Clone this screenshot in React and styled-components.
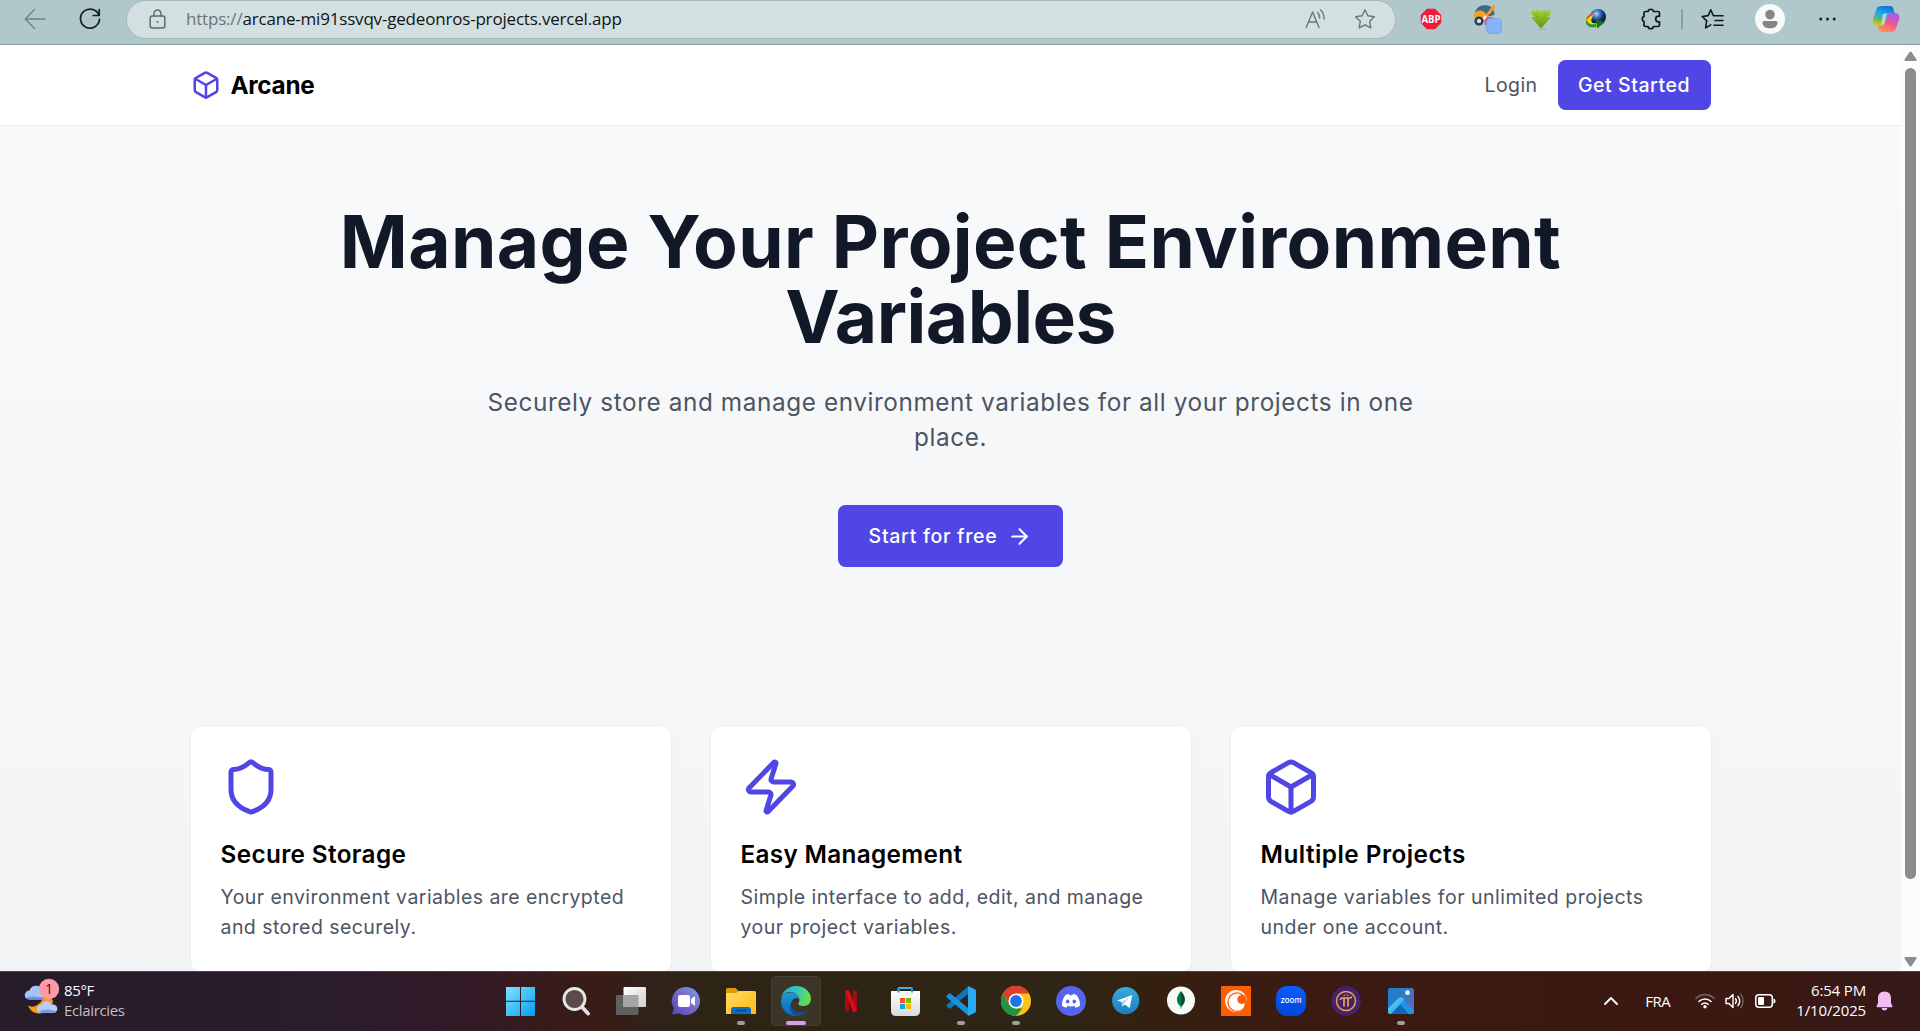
import React from 'react';
import styled, { createGlobalStyle } from 'styled-components';
import { Box, Shield, Zap, ArrowRight } from 'lucide-react';

const Global = createGlobalStyle`
  *, *::before, *::after { box-sizing: border-box; }
  body { margin: 0; overflow: hidden; }
  h1, h2, h3, p { margin: 0; }
  svg { display: block; flex: none; }
`;

const brand = '#4f46e5';
const uiFont = '"Open Sans", "Noto Sans", sans-serif';
const pageFont = 'Inter, "Liberation Sans", sans-serif';

const Screen = styled.div`
  width: 1920px;
  height: 1031px;
  display: flex;
  flex-direction: column;
  overflow: hidden;
`;

/* ---------- browser toolbar ---------- */
const Toolbar = styled.header`
  height: 45px;
  flex: none;
  display: flex;
  align-items: flex-start;
  padding-left: 15px;
  background: #b0c7cb;
  border-bottom: 1px solid #879a9d;
`;
const Slot = styled.div`
  width: ${(p) => p.$w || 40}px;
  height: 37px;
  margin-left: ${(p) => p.$gap || 0}px;
  flex: none;
  display: flex;
  align-items: center;
  justify-content: center;
`;
const AddressBar = styled.div`
  width: 1270px;
  height: 39px;
  margin-left: 16px;
  padding: 0 19px 2px 22px;
  flex: none;
  display: flex;
  align-items: center;
  background: #d3e0e1;
  border: 1px solid #a9b7b8;
  border-radius: 20px;
`;
const Url = styled.div`
  flex: 1;
  padding-left: 20px;
  font: 400 17px/24px ${uiFont};
  letter-spacing: -0.19px;
  white-space: nowrap;
  color: #101415;
`;
const Scheme = styled.span`
  color: #6b7475;
`;
const Divider = styled.div`
  width: 2px;
  height: 20px;
  margin: 9px 0 0 10px;
  flex: none;
  background: #8b9da0;
`;

/* ---------- web page ---------- */
const Viewport = styled.div`
  height: 926px;
  flex: none;
  display: flex;
`;
const Page = styled.div`
  width: 1901px;
  flex: none;
  overflow: hidden;
  font-family: ${pageFont};
  background: linear-gradient(#f9fafb, #f3f4f6);
`;
const Nav = styled.nav`
  height: 80px;
  padding: 0 190.5px;
  display: flex;
  align-items: center;
  background: #fff;
  box-shadow: 0 1px 2px rgba(0, 0, 0, 0.06);
`;
const Brand = styled.div`
  display: flex;
  align-items: center;
  gap: 10px;
  margin-right: auto;
  font-size: 24.3px;
  font-weight: 700;
  letter-spacing: -0.3px;
  color: #000;
`;
const Login = styled.a`
  margin-right: 20px;
  font-size: 19.5px;
  letter-spacing: 0.4px;
  color: #4b5563;
`;
const Button = styled.button`
  display: flex;
  align-items: center;
  justify-content: center;
  width: ${(p) => (p.$large ? 225 : 153)}px;
  height: ${(p) => (p.$large ? 62 : 50)}px;
  gap: 10px;
  padding: 0;
  border: 0;
  border-radius: 7.5px;
  background: ${brand};
  color: #fff;
  font-family: inherit;
  font-size: 19.5px;
  font-weight: 500;
  letter-spacing: ${(p) => (p.$large ? 0.7 : 0.55)}px;
  white-space: nowrap;
`;
const Hero = styled.section`
  height: 602px;
  padding-top: 79px;
  display: flex;
  flex-direction: column;
  align-items: center;
  text-align: center;
`;
const Title = styled.h1`
  font-size: 73px;
  line-height: 75px;
  font-weight: 700;
  color: #111827;
`;
const TitleLine = styled.span`
  display: block;
  letter-spacing: ${(p) => p.$track}px;
`;
const Subtitle = styled.p`
  width: 960px;
  margin: 31px 0 50px;
  font-size: 24.3px;
  line-height: 35px;
  letter-spacing: 0.6px;
  color: #4b5563;
`;
const Cards = styled.section`
  display: grid;
  grid-template-columns: repeat(3, 480px);
  gap: 40px;
  justify-content: center;
`;
const Card = styled.article`
  height: 245px;
  padding: 30px;
  background: #fff;
  border-radius: 10px;
  box-shadow: 0 1px 3px rgba(0, 0, 0, 0.06);
`;
const CardTitle = styled.h3`
  margin: 20px 0 10px;
  font-size: 24.3px;
  line-height: 35px;
  font-weight: 600;
  letter-spacing: ${(p) => p.$track}px;
  color: #000;
`;
const CardText = styled.p`
  font-size: 19.5px;
  line-height: 30px;
  letter-spacing: ${(p) => p.$track}px;
  white-space: pre-line;
  color: #4b5563;
`;
const Scrollbar = styled.div`
  width: 19px;
  display: flex;
  flex-direction: column;
  align-items: center;
  padding: 6px 0 4px 0;
  background: #fcfcfc;
`;
const Thumb = styled.div`
  width: 11px;
  height: 811px;
  margin: 7px 0 auto;
  border-radius: 6px;
  background: #8b8b8b;
`;

/* ---------- taskbar ---------- */
const Taskbar = styled.footer`
  height: 60px;
  flex: none;
  display: grid;
  grid-template-columns: 495px 930px 495px;
  color: #fff;
  font: 400 15px/20px ${uiFont};
  border-top: 1px solid #4c4444;
  background: linear-gradient(90deg, #271c2a 0, #2b1c2e 330px, #331a26 470px, #3a1c15 600px, #30221a 650px, #2e2416 700px, #2e2516 1060px, #35200f 1160px, #3a1b13 1290px, #3b1811 1760px, #35191a 1920px);
`;
const Weather = styled.div`
  display: flex;
  align-items: flex-start;
  padding: 6px 0 0 24px;
  gap: 4px;
`;
const WeatherText = styled.div`
  padding-top: 2px;
  letter-spacing: -0.35px;
`;
const Muted = styled.div`
  color: #c6bcc5;
`;
const Apps = styled.div`
  display: flex;
  gap: 5px;
  padding: 4px 0 0 1px;
`;
const AppTile = styled.div`
  width: 50px;
  height: 50px;
  flex: none;
  display: flex;
  flex-direction: column;
  align-items: center;
  padding-top: ${(p) => (p.$active ? 9 : 10)}px;
  border-radius: 5px;
  border: ${(p) => (p.$active ? '1px solid #48402f' : '0')};
  background: ${(p) => (p.$active ? '#3c3527' : 'transparent')};
`;
const Indicator = styled.div`
  width: ${(p) => (p.$active ? 20 : 8)}px;
  height: 4px;
  margin-top: 5px;
  flex: none;
  border-radius: 2px;
  background: ${(p) => (p.$active ? '#dc9de2' : '#a39d97')};
`;
const Tray = styled.div`
  display: flex;
  align-items: flex-start;
  justify-content: flex-end;
  padding: 8px 27px 0 0;
`;
const TrayItem = styled.div`
  height: 42px;
  margin-left: ${(p) => p.$gap}px;
  display: flex;
  align-items: center;
  letter-spacing: -0.5px;
`;
const Clock = styled.div`
  margin: 0 10px 0 20px;
  text-align: right;
  letter-spacing: -0.15px;
`;

/* ---------- toolbar drawings ---------- */
const line = (c, w = 1.4) => ({ fill: 'none', stroke: c, strokeWidth: w, strokeLinecap: 'round', strokeLinejoin: 'round' });

const Back = () => (
  <svg width="22" height="22" viewBox="0 0 22 22" {...line('#728286')}><path d="M21 11H1.5M10.5 1.5 1.3 11l9.2 9.5" /></svg>
);
const Refresh = () => (
  <svg width="22" height="22" viewBox="0 0 22 22" {...line('#1b1f20', 1.7)}><path d="M20 7.5A9.5 9.5 0 1 0 20.5 11M20.2 1.5v6h-6" /></svg>
);
const Lock = () => (
  <svg width="17" height="20" viewBox="0 0 17 20" {...line('#5f696a', 1.5)}><rect x="1.2" y="7" width="14.6" height="12" rx="2" /><path d="M5 7V4.5a3.5 3.5 0 0 1 7 0V7" /><circle cx="8.5" cy="13" r="1" fill="#5f696a" stroke="none" /></svg>
);
const ReadAloud = () => (
  <svg width="21" height="20" viewBox="0 0 21 20" {...line('#6b7677', 1.4)}><path d="M1.2 18.5 7.6 3l6.4 15.500M3.600 13h8M12.500 3.500c1.500 1.300 2.200 3 2.200 5.500M15.500 1c2.400 2 3.600 5 3.600 9" /></svg>
);
const starPath = 'M11 1.8l2.9 6 6.5.9-4.7 4.6 1.1 6.6L11 16.8l-5.8 3.1 1.1-6.6L1.6 8.7l6.5-.9z';
const Star = () => (
  <svg width="22" height="22" viewBox="0 0 22 22" {...line('#6b7677', 1.4)}><path d={starPath} /></svg>
);
const AdBlock = () => (
  <svg width="22" height="22" viewBox="0 0 22 22"><path d="M7 .8h8L21.200 7v8L15 21.200H7L.8 15V7z" fill="#ee1b38" /><text x="11" y="15" textAnchor="middle" fontFamily="Open Sans, sans-serif" fontWeight="700" fontSize="11" textLength="19" lengthAdjust="spacingAndGlyphs" fill="#fff">ABP</text></svg>
);
const Picker = () => (
  <svg width="30" height="30" viewBox="0 0 30 30">
    <path d="M2 8C4 2 10 .5 15 1.500c4 1 6.500 5 6.500 9.500l-9 2z" fill="#3c6c88" />
    <path d="M.5 12c1-5 6-7 11-4l2.500 3-3 7-7-1z" fill="#f6a21c" />
    <path d="M11 13h9v8h-8z" fill="#ec4b83" />
    <path d="m12 12 8-11 2 .5v2.500l-8 9z" fill="#ff9a27" /><path d="m12 11 2 2-3 3-1.500-1z" fill="#fff" />
    <circle cx="6" cy="17" r="4.600" fill="#263c4b" /><circle cx="6" cy="17" r="2.200" fill="#c7e0ee" />
    <rect x="13.500" y="14.500" width="15" height="15" rx="4" fill="#88b2f7" stroke="#759fde" strokeWidth=".8" />
  </svg>
);
const Download = () => (
  <svg width="22" height="22" viewBox="0 0 22 22">
    <defs><linearGradient id="dl" x2="0" y2="1"><stop stopColor="#a6d53a" /><stop offset="1" stopColor="#5d960a" /></linearGradient></defs>
    <path d="M1.500 1.500 6 4V1l5 2.500L16 1v3l4.500-2.500v5L17 9h4L11 20.500 1 9h4L1.500 6.500z" fill="url(#dl)" /><path d="M6 4v4.500l5 2 5-2V4" fill="none" stroke="#7fb01f" strokeWidth=".8" /><path d="M7 21.200h8" stroke="#94abac" />
  </svg>
);
const Globe = () => (
  <svg width="22" height="22" viewBox="0 0 22 22">
    <defs><radialGradient id="gl" cx=".4" cy=".3"><stop stopColor="#b7d8ff" /><stop offset=".5" stopColor="#396fbd" /><stop offset="1" stopColor="#0d234e" /></radialGradient></defs>
    <circle cx="13" cy="9" r="8" fill="url(#gl)" />
    <path d="M9 5C3 6 0 11 1 15c2 5 8 5 12 4l-1-4c-5 1-7-1-5-5z" fill="#f4d414" /><path d="M2 11c0 5 4 6 9 5v3c-6 1-10-1-10-5z" fill="#1e9c28" /><path d="M11 11.500l9 2.500-8 6.500z" fill="#12751c" />
    <path d="M8 6c-3 1-5 2-6 5" stroke="#dc3c24" strokeWidth="1.500" fill="none" />
  </svg>
);
const Puzzle = () => (
  <svg width="22" height="22" viewBox="0 0 22 22" {...line('#141819', 1.700)}><path d="M8 3.500a2.800 2.800 0 0 1 5.500 0H18a1.500 1.500 0 0 1 1.500 1.500v3.200h-1a2.800 2.800 0 0 0 0 5.600h1V17a1.500 1.500 0 0 1-1.500 1.500h-4.500a2.800 2.800 0 0 1-5.500 0H5.500A1.500 1.500 0 0 1 4 17v-3.400a2.800 2.800 0 0 1 0-5.200V5a1.500 1.500 0 0 1 1.500-1.500z" /></svg>
);
const Favorites = () => (
  <svg width="24" height="22" viewBox="0 0 24 22" {...line('#141819', 1.600)}><path d="M13 7.800 12.300 7.700 9.800 1.800 7.200 7.600l-6 .9 4.500 4.400-1.100 7 5.200-3M13 7.800h9M14 12.500h8M13 17.200h9" /></svg>
);
const Avatar = () => (
  <svg width="30" height="30" viewBox="0 0 30 30"><circle cx="15" cy="15" r="15" fill="#f8f9f9" /><circle cx="15" cy="10.600" r="4.800" fill="#858585" /><path d="M9 17h12q1.500 0 1.500 1.500c0 4-3 5.800-7.500 5.800s-7.500-1.800-7.500-5.800Q7.500 17 9 17z" fill="#858585" /></svg>
);
const Dots = () => (
  <svg width="20" height="6" viewBox="0 0 20 6" fill="#1b1f20"><circle cx="2.800" cy="3" r="1.500" /><circle cx="9.500" cy="3" r="1.500" /><circle cx="16.200" cy="3" r="1.500" /></svg>
);
const Copilot = () => (
  <svg width="28" height="28" viewBox="0 0 28 28">
    <defs>
      <linearGradient id="cpa" x1=".6" y1="0" x2=".2" y2="1"><stop stopColor="#1471e0" /><stop offset=".45" stopColor="#27aee0" /><stop offset=".7" stopColor="#62be5a" /><stop offset="1" stopColor="#f6c419" /></linearGradient>
      <linearGradient id="cpb" x1=".7" y1="0" x2=".2" y2="1"><stop stopColor="#a45cf2" /><stop offset=".5" stopColor="#f0588c" /><stop offset="1" stopColor="#ff9a43" /></linearGradient>
    </defs>
    <path d="M9 1h9c2 0 3 1 3.500 3l1 4h-4c-2 0-3 1-3.500 3l-2 7c-.5 2-1.500 3-4 3H5c-4 0-5-3-4-7l3-9c1-3 2.500-4 5-4z" fill="url(#cpa)" />
    <path d="M19 27h-9c-2 0-3-1-3.500-3l-.7-3h3.700c2 0 3-1 3.500-3l2-7c.5-2 1.500-3 4-3h4c4 0 5 3 4 7l-3 8c-1 3-2.500 4-5 4z" fill="url(#cpb)" />
    <path d="m11 9 4-1-3 11-3 1z" fill="#e9f2f4" opacity=".65" />
  </svg>
);

/* ---------- taskbar drawings ---------- */
const Ico = ({ children }) => <svg width="30" height="30" viewBox="0 0 30 30">{children}</svg>;

const Windows = () => (
  <Ico>
    <defs><linearGradient id="win" gradientUnits="userSpaceOnUse" x1="0" y1="0" x2="30" y2="30"><stop stopColor="#82ddfc" /><stop offset=".5" stopColor="#3cc3fb" /><stop offset="1" stopColor="#0a92f5" /></linearGradient></defs>
    <path d="M-1 1h14v13.700H-1zM14 1h14v13.700H14zM-1 15.800h14V30H-1zM14 15.800h14V30H14z" fill="url(#win)" transform="translate(1)" />
  </Ico>
);
const Search = () => (
  <Ico><circle cx="13.500" cy="13" r="10.500" fill="#5c4a48" stroke="#e7e7e9" strokeWidth="2.800" /><path d="m21 21 6 6.500" stroke="#dfe1e4" strokeWidth="3.800" strokeLinecap="round" /></Ico>
);
const TaskView = () => (
  <Ico>
    <defs><linearGradient id="tv" x2="1" y2="1"><stop stopColor="#fff" /><stop offset="1" stopColor="#cfcfcf" /></linearGradient></defs>
    <rect x="0" y="9" width="22.500" height="20" rx="1" fill="#606060" /><rect x="7.500" y="1" width="22.500" height="20" rx="1" fill="url(#tv)" /><path d="M7.500 9h15v12h-15z" fill="#a5a5a5" />
  </Ico>
);
const Chat = () => (
  <Ico>
    <defs><linearGradient id="ch" x1="1" x2="0" y2="1"><stop stopColor="#7fa0ec" /><stop offset=".5" stopColor="#7668c8" /><stop offset="1" stopColor="#5046c0" /></linearGradient></defs>
    <path d="M15.500 1a14 14 0 1 1-7 26.400L1 28.500l2-6A14 14 0 0 1 15.500 1z" fill="url(#ch)" /><rect x="7" y="9" width="12" height="12" rx="2" fill="#fff" /><path d="m20 13 4-3v10l-4-3z" fill="#fff" />
  </Ico>
);
const Folder = () => (
  <Ico>
    <defs><linearGradient id="fo" x2="1" y2="1"><stop stopColor="#ffdb67" /><stop offset="1" stopColor="#fdb913" /></linearGradient></defs>
    <path d="M0 3.500Q0 2 1.500 2h8l3 3H29v12H0z" fill="#dd9b06" /><path d="M0 7h10l3-2h15.500Q30 5 30 6.500v21.500H0z" fill="url(#fo)" /><path d="M5 28v-4q0-3 3-3h14q3 0 3 3v4z" fill="#0a6dbd" /><path d="M9 24.500h12" stroke="#084a88" strokeWidth="1.500" />
  </Ico>
);
const Edge = () => (
  <Ico>
    <defs>
      <linearGradient id="ea" x2="1" y2=".2"><stop stopColor="#2aa6dc" /><stop offset=".5" stopColor="#30c4c4" /><stop offset="1" stopColor="#66dc4b" /></linearGradient>
      <linearGradient id="eb" x2="0" y2="1"><stop stopColor="#1a9adb" /><stop offset="1" stopColor="#0b66c0" /></linearGradient>
    </defs>
    <path d="M.2 13C1 5.500 7 0 15 0c9 0 15 6.500 15 12.500 0 5-3.500 7.500-7.500 7.500-4 0-5.500-1.500-5.200-2.500.3-.8 1.200-1.300 1.200-3.500C18.500 9.500 13.500 6 8 6 4 6 1.500 9 .2 13z" fill="url(#ea)" />
    <path d="M0 14.500C.5 9.500 4 6.500 8.500 6.500c5.500 0 9.500 3.200 9.800 7-.8-1.200-2-1.500-3-1.500-3 0-5.800 3.500-5.800 8.500 0 4.500 3.500 8.500 7.500 9.400-.6.100-1.300.1-2 .1C6.500 30 0 23.500 0 14.500z" fill="url(#eb)" />
    <path d="M10.500 17c-1 6 3.500 9.500 9 9.500 3.500 0 5.500-1 7.500-2.300C24 28.500 20 30 16.500 30c-6-1-10-7.500-6-13z" fill="#124f96" />
  </Ico>
);
const Netflix = () => (
  <Ico><path d="M9 4.500h4v21H9zM17 4.500h4v21h-4z" fill="#a30d14" /><path d="M9 4.500h4.200l7.800 21h-4.200z" fill="#e50914" /></Ico>
);
const Store = () => (
  <Ico>
    <defs><linearGradient id="st" x2="0" y2="1"><stop stopColor="#fff" /><stop offset="1" stopColor="#d9d9d9" /></linearGradient></defs>
    <path d="M7.500 7V2.500Q7.500 2 8 2h12.500q.5 0 .5.500V7" fill="none" stroke="#35b5e8" strokeWidth="2" /><path d="M0 5h29v20q0 5-5 5H5q-5 0-5-5z" fill="url(#st)" /><path d="M7.500 2v4.500M21 2v4.500" stroke="#2299d1" strokeWidth="2" />
    <path d="M9 12h5v5H9z" fill="#f25022" /><path d="M15 12h5v5h-5z" fill="#7fba00" /><path d="M9 18h5v5H9z" fill="#00a4ef" /><path d="M15 18h5v5h-5z" fill="#ffb900" />
  </Ico>
);
const Code = () => (
  <Ico>
    <path d="M22 8 4.500 22.500Q3.500 23 2.500 22L.6 20.200Q0 19.500.7 18.800L22 .5z" fill="#0f76b9" /><path d="M22 22 4.500 7.500Q3.500 7 2.500 8L.6 9.800Q0 10.500.7 11.200L22 29.500z" fill="#1592d8" /><path d="M22 0 28.500 3Q30 3.700 30 5v20q0 1.300-1.500 2L22 30z" fill="#29a9f2" />
  </Ico>
);
const Chrome = () => (
  <Ico>
    <circle cx="15" cy="15" r="15" fill="#fcc31e" /><path d="M2 7.500a15 15 0 0 1 26 0H15l-6.500 11.200z" fill="#e33b2e" /><path d="M2 7.500 8.500 18.800 15 22.500h6.500L15 30A15 15 0 0 1 2 7.500z" fill="#229342" /><circle cx="15" cy="15" r="7.500" fill="#fff" /><circle cx="15" cy="15" r="5.900" fill="#1a73e8" />
  </Ico>
);
const Discord = () => (
  <Ico><circle cx="15" cy="15" r="15" fill="#5764f2" /><path d="M9.500 9q2-.9 3.500-1l.6 1.200h2.800L17 8q1.500.1 3.500 1 4 5.500 3.500 10.800-2 1.500-4.300 2l-1.100-1.800q-3.600.8-7.200 0l-1.100 1.800q-2.300-.5-4.300-2Q5.500 14.500 9.500 9z" fill="#fff" /><ellipse cx="11.700" cy="15.600" rx="1.800" ry="2" fill="#5764f2" /><ellipse cx="18.300" cy="15.600" rx="1.800" ry="2" fill="#5764f2" /></Ico>
);
const Telegram = () => (
  <Ico>
    <defs><linearGradient id="tg" x2="0" y2="1"><stop stopColor="#38abe0" /><stop offset="1" stopColor="#1b7fb9" /></linearGradient></defs>
    <circle cx="14.700" cy="14.700" r="13.600" fill="url(#tg)" /><path d="m6.200 14.500 15-5.500-2.500 13-5-3.600-2.500 2-.5-4.500z" fill="#fff" /><path d="m10.700 16 8-5-5.500 6-2 3.300z" fill="#a9cfe4" />
  </Ico>
);
const Mongo = () => (
  <Ico><circle cx="15" cy="14.500" r="14" fill="#f9f9f7" /><path d="M15 5c-5.500 6-5 11.500-.5 15.500L15 23.500z" fill="#00794d" /><path d="M15 5c5.500 6 5 11.500.5 15.500L15 23.500z" fill="#074b36" /></Ico>
);
const Crunchy = () => (
  <Ico><path d="M0 0h30v30H0z" fill="#ff5e00" /><circle cx="15" cy="15" r="10.900" fill="#fff" /><circle cx="16.200" cy="16.200" r="9.900" fill="#ff5e00" /><circle cx="16.300" cy="16.200" r="8.600" fill="#fff" /><circle cx="20.800" cy="13.500" r="4.500" fill="#ff5e00" /><path d="M24 15.500h3v8l-6 3h-4q7-3 7-11z" fill="#ff5e00" /></Ico>
);
const Zoom = () => (
  <Ico>
    <defs><linearGradient id="zm" x2="0" y2="1"><stop stopColor="#0b5cff" /><stop offset="1" stopColor="#0049d8" /></linearGradient></defs>
    <rect width="30" height="30" rx="11.500" fill="url(#zm)" /><text x="15" y="17.300" textAnchor="middle" textLength="21" lengthAdjust="spacingAndGlyphs" fontFamily="Inter, sans-serif" fontWeight="500" fontSize="8" fill="#fff">zoom</text>
  </Ico>
);
const Pi = () => (
  <Ico><circle cx="15" cy="15" r="14.800" fill="#46226a" /><circle cx="15" cy="15" r="9.500" fill="none" stroke="#eda24a" strokeWidth="1.500" /><path d="M9.500 14q0-2 2-2h7.500q1.500 0 1.500-1.500M13 12v8.500M17 12v8.500M13.500 8.800v1M16.500 8.800v1" fill="none" stroke="#f0a84d" strokeWidth="1.700" /></Ico>
);
const Photos = () => (
  <Ico>
    <defs>
      <linearGradient id="pa" x2="1" y2="1"><stop stopColor="#1483d0" /><stop offset=".5" stopColor="#3279c4" /><stop offset="1" stopColor="#8a57ac" /></linearGradient>
      <linearGradient id="pb" x2="1" y2="1"><stop stopColor="#6be3fa" /><stop offset="1" stopColor="#1598e0" /></linearGradient>
      <clipPath id="pc"><rect x="2" y="2" width="26" height="26" rx="2.500" /></clipPath>
    </defs>
    <g clipPath="url(#pc)">
      <rect x="2" y="2" width="26" height="26" fill="url(#pa)" />
      <path d="M3 28 14.500 15.500 27 28z" fill="#1565c0" />
      <path d="M13 13.200q2-2 4 0L30 26.500V30h-5.500L13 17z" fill="#1e97e3" />
      <path d="M0 24.500 12.500 12.200q2.500-2 4.800.3l1.200 1.300L4 29H0z" fill="url(#pb)" />
      <circle cx="21.500" cy="6.700" r="2.400" fill="#eaf5ff" />
    </g>
  </Ico>
);
const WeatherIcon = () => (
  <svg width="36" height="38" viewBox="0 0 36 38">
    <path d="M20 18.500c5 0 9 2 9 5-1 7-7 12-14 12-5 0-9-3-11-8 5 3 12 0 16-9z" fill="#f59a20" />
    <path d="M5 21.500a4.500 4.500 0 0 1 .5-9 7 7 0 0 1 13.500 1v8z" fill="#a4c4f7" /><path d="M3 19.500q3-2 16 0v2H5q-1.500-.5-2-2z" fill="#6f93dd" />
    <path d="M17 35a4 4 0 0 1 0-8 6 6 0 0 1 11-.5 4.300 4.300 0 0 1 2 8.500z" fill="#b5cdf8" /><path d="M15 33q8-3 17 0-1 2-3 2H17q-1.500-.5-2-2z" fill="#7a9bdf" />
    <circle cx="25" cy="11" r="10.200" fill="#ff99a4" /><text x="25" y="16" textAnchor="middle" fontFamily="Open Sans, sans-serif" fontSize="14" fill="#2a1a22">1</text>
  </svg>
);
const Chevron = () => <svg width="16" height="10" viewBox="0 0 16 10" {...line('#fff', 1.900)}><path d="m2 8 6-6 6 6" /></svg>;
const Wifi = () => (
  <svg width="20" height="16" viewBox="0 0 20 16" {...line('#fff', 1.600)}><path d="M1 5.500a12.500 12.500 0 0 1 18 0" stroke="#76625e" /><path d="M4 8.500a8.500 8.500 0 0 1 12 0M6.800 11.300a4.500 4.500 0 0 1 6.400 0" /><circle cx="10" cy="13.700" r="1.700" fill="#fff" stroke="none" /></svg>
);
const Speaker = () => (
  <svg width="20" height="16" viewBox="0 0 20 16" {...line('#fff', 1.400)}><path d="M1 5.500h3L8 1.500v13l-4-4H1z" /><path d="M10.500 5.500q1.800 2.500 0 5M13 3.300q3.400 4.700 0 9.400" /><path d="M15.800 1.200q4.600 6.800 0 13.600" stroke="#76625e" /></svg>
);
const Battery = () => (
  <svg width="21" height="14" viewBox="0 0 21 14"><rect x=".8" y=".8" width="16.500" height="12.400" rx="3" fill="none" stroke="#fff" strokeWidth="1.500" /><rect x="3" y="3" width="6" height="8" rx="1" fill="#fff" /><path d="M18.500 4.500q2 0 2 2.500t-2 2.500z" fill="#fff" /></svg>
);
const Bell = () => (
  <svg width="17" height="20" viewBox="0 0 17 20" fill="#f1bdf3"><path d="M8.500.5C4.500.5 2 3.300 2 7v5L.5 15.200q0 1 1 1h14q1 0 1-1L15 12V7C15 3.300 12.500.5 8.500.5zM5.500 17h6q-.7 2.500-3 2.500t-3-2.500z" /></svg>
);
const ScrollArrow = ({ down }) => (
  <svg width="13" height="10" viewBox="0 0 13 10" fill="#8b8b8b"><path d={down ? 'M1.500 0h10q1.500.3 1 1.500L7.500 9q-1 1.200-2 0L.5 1.500Q0 .3 1.500 0z' : 'M1.500 10h10q1.500-.3 1-1.500L7.500 1q-1-1.200-2 0L.5 8.500Q0 9.700 1.500 10z'} /></svg>
);

const extensions = [AdBlock, Picker, Download, Globe, Puzzle];
const apps = [
  { Icon: Windows }, { Icon: Search }, { Icon: TaskView }, { Icon: Chat },
  { Icon: Folder, open: true }, { Icon: Edge, open: true, active: true },
  { Icon: Netflix }, { Icon: Store }, { Icon: Code, open: true }, { Icon: Chrome, open: true },
  { Icon: Discord }, { Icon: Telegram }, { Icon: Mongo }, { Icon: Crunchy },
  { Icon: Zoom }, { Icon: Pi }, { Icon: Photos, open: true },
];
const features = [
  { Icon: Shield, title: 'Secure Storage', track: 0.36, text: 'Your environment variables are encrypted\nand stored securely.', textTrack: 0.44 },
  { Icon: Zap, title: 'Easy Management', track: 0.33, text: 'Simple interface to add, edit, and manage\nyour project variables.', textTrack: 0.47 },
  { Icon: Box, title: 'Multiple Projects', track: 0.48, text: 'Manage variables for unlimited projects\nunder one account.', textTrack: 0.5 },
];

export default function App() {
  return (
    <Screen>
      <Global />
      <Toolbar>
        <Slot><Back /></Slot>
        <Slot $gap={15}><Refresh /></Slot>
        <AddressBar>
          <Lock />
          <Url><Scheme>https://</Scheme>arcane-mi91ssvqv-gedeonros-projects.vercel.app</Url>
          <ReadAloud />
          <Slot $w={22} $gap={28}><Star /></Slot>
        </AddressBar>
        {extensions.map((Icon, i) => (
          <Slot key={i} $gap={15}>{Icon === Picker ? <Slot $w={34} $gap={4}><Picker /></Slot> : <Icon />}</Slot>
        ))}
        <Divider />
        <Slot $gap={10}><Favorites /></Slot>
        <Slot $gap={17}><Avatar /></Slot>
        <Slot $gap={18}><Dots /></Slot>
        <Slot $gap={18}><Copilot /></Slot>
      </Toolbar>

      <Viewport>
        <Page>
          <Nav>
            <Brand><Box size={30} color={brand} />Arcane</Brand>
            <Login>Login</Login>
            <Button>Get Started</Button>
          </Nav>
          <Hero>
            <Title>
              <TitleLine $track={0.35}>Manage Your Project Environment</TitleLine>
              <TitleLine $track={-0.5}>Variables</TitleLine>
            </Title>
            <Subtitle>Securely store and manage environment variables for all your projects in one place.</Subtitle>
            <Button $large>Start for free<ArrowRight size={25} /></Button>
          </Hero>
          <Cards>
            {features.map(({ Icon, title, track, text, textTrack }) => (
              <Card key={title}>
                <Icon size={60} color={brand} />
                <CardTitle $track={track}>{title}</CardTitle>
                <CardText $track={textTrack}>{text}</CardText>
              </Card>
            ))}
          </Cards>
        </Page>
        <Scrollbar>
          <ScrollArrow />
          <Thumb />
          <ScrollArrow down />
        </Scrollbar>
      </Viewport>

      <Taskbar>
        <Weather>
          <WeatherIcon />
          <WeatherText>85°F<Muted>Eclaircies</Muted></WeatherText>
        </Weather>
        <Apps>
          {apps.map(({ Icon, open, active }, i) => (
            <AppTile key={i} $active={active}>
              <Icon />
              {open && <Indicator $active={active} />}
            </AppTile>
          ))}
        </Apps>
        <Tray>
          <TrayItem $gap={0}><Chevron /></TrayItem>
          <TrayItem $gap={26}>FRA</TrayItem>
          <TrayItem $gap={25}><Wifi /></TrayItem>
          <TrayItem $gap={10}><Speaker /></TrayItem>
          <TrayItem $gap={10}><Battery /></TrayItem>
          <Clock>6:54 PM<br />1/10/2025</Clock>
          <TrayItem $gap={0}><Bell /></TrayItem>
        </Tray>
      </Taskbar>
    </Screen>
  );
}
